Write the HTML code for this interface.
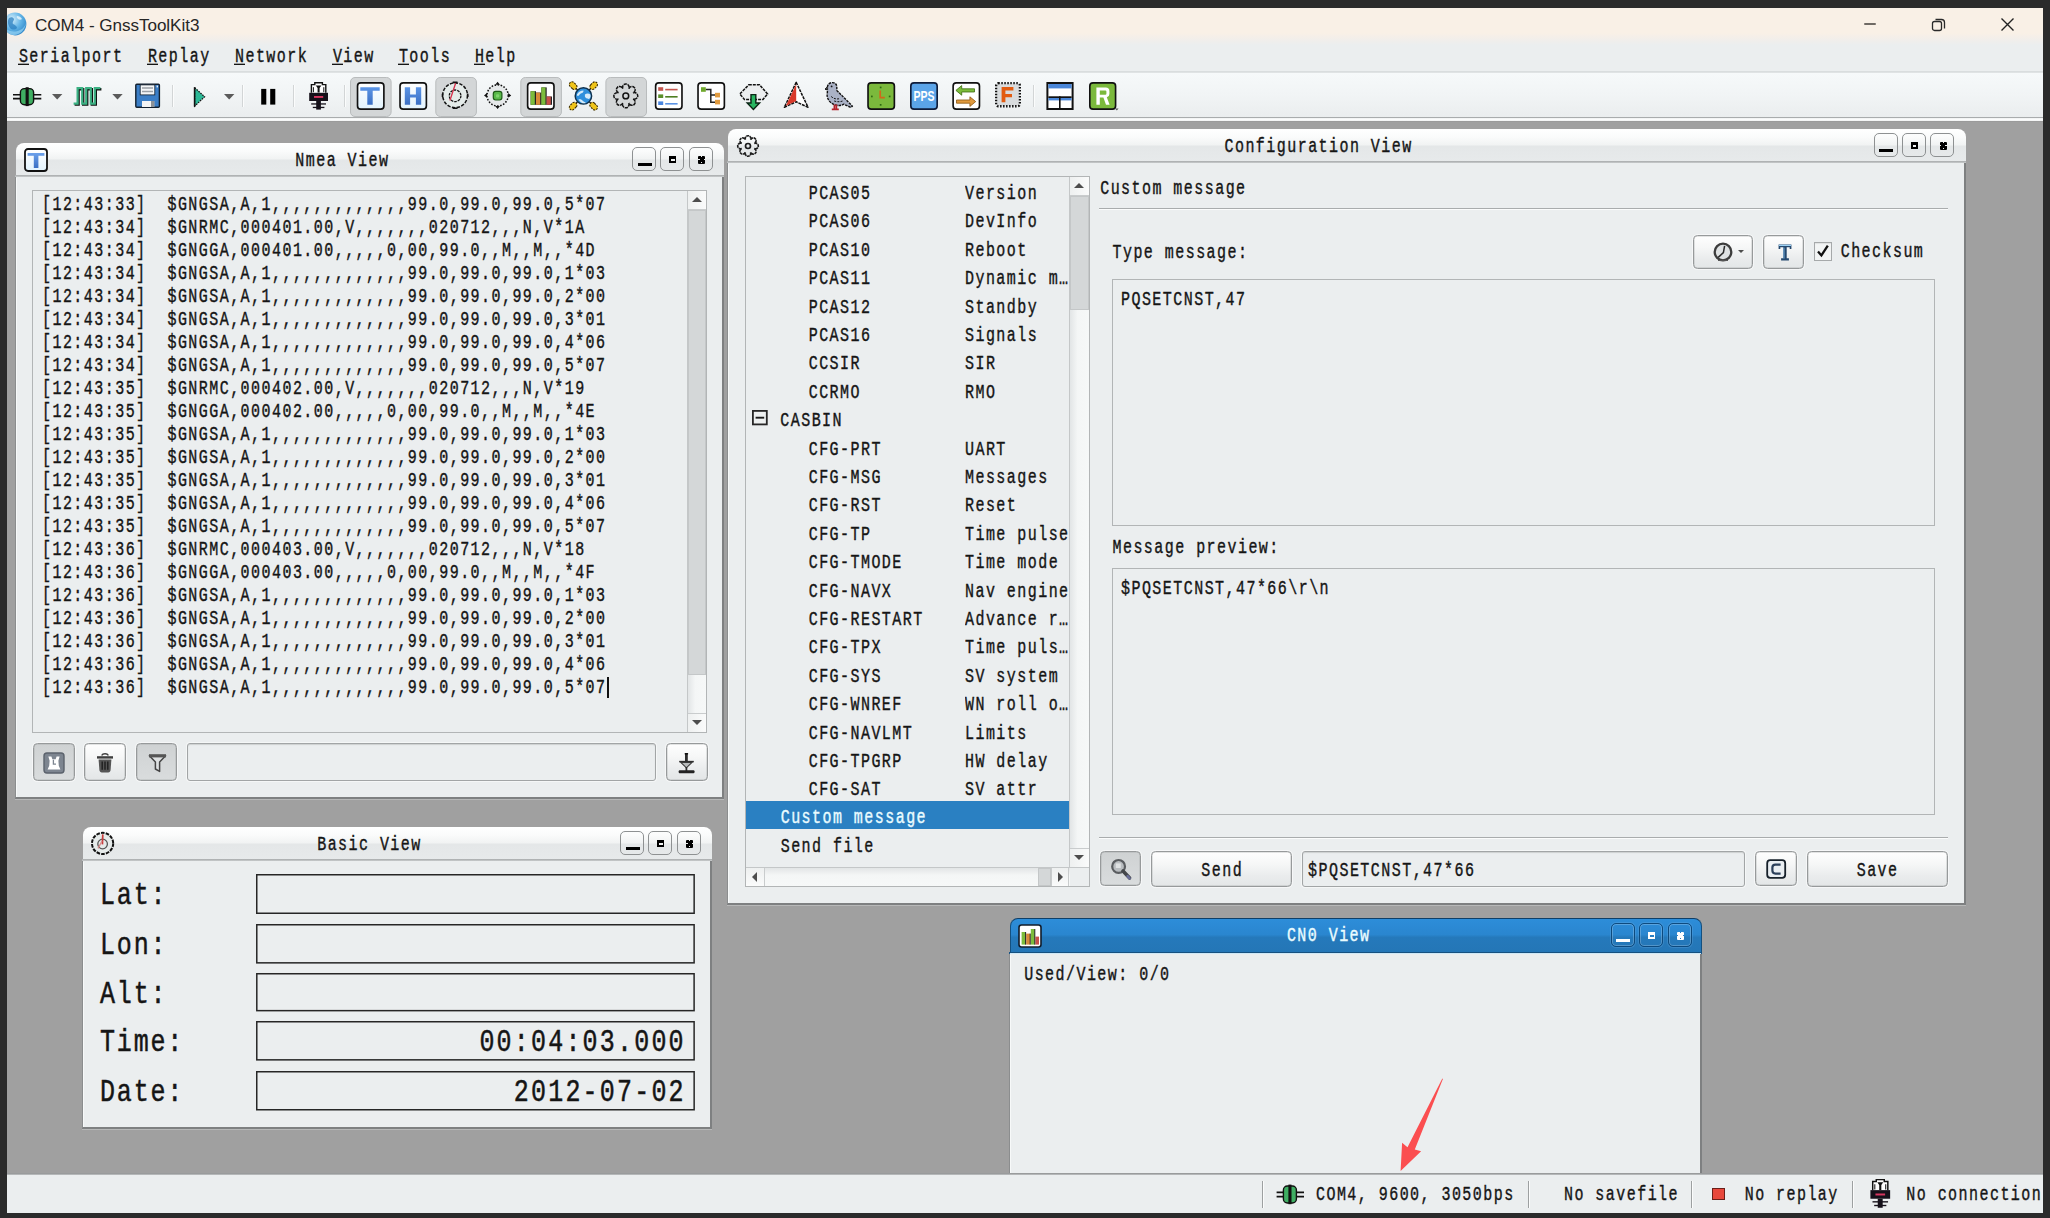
<!DOCTYPE html>
<html>
<head>
<meta charset="utf-8">
<title>COM4 - GnssToolKit3</title>
<style>
*{box-sizing:border-box;margin:0;padding:0}
html,body{width:2050px;height:1218px;overflow:hidden;background:#2b2b2b}
body{position:relative;font-family:"Liberation Mono",monospace;color:#151515}
#app{position:absolute;left:0;top:0;width:2050px;height:1218px;background:#a0a0a0;clip-path:inset(8px 7px 5px 7px)}
.m{position:absolute;font-family:"Liberation Mono",monospace;font-size:15.0px;letter-spacing:1.452px;line-height:20px;white-space:pre;transform:scaleY(1.37);transform-origin:0 0;color:#151515;-webkit-text-stroke:0.3px currentColor}
.big{font-size:25.0px;line-height:27px;letter-spacing:1.83px;transform:scaleY(1.285);-webkit-text-stroke:0.4px currentColor}
.w{color:#eafcff}
.win{position:absolute;background:#ebeeef}
.btn{position:absolute;border:1px solid #979a9b;border-radius:4.500px;background:linear-gradient(#fefefe,#f6f7f7 35%,#eaeced 70%,#e3e6e7);box-shadow:0 0 0 1px rgba(255,255,255,.55),inset 0 0 0 .5px rgba(150,153,154,.5)}
.btn.on{background:linear-gradient(#cfd2d3,#d9dcdd);border-color:#979a9b}
.fld{position:absolute;border:1px solid #a2a5a6;border-radius:3px;background:#ebeeef;box-shadow:inset 0 1px 1px rgba(0,0,0,.13),0 0 0 1px rgba(255,255,255,.5)}
.ta{position:absolute;border:1px solid #b2b5b6;background:#ebeeef;box-shadow:inset 1px 1px 0 rgba(255,255,255,.0)}
.tbn{position:absolute;width:24px;height:24px;border:1px solid #8e9192;border-radius:5px}
.tbn i{position:absolute;background:#000;display:block}
.tbn.a{border:1.500px solid #0d4a7e;box-shadow:inset 0 0 0 1px rgba(255,255,255,.22),0 0 0 1px rgba(120,180,230,.25)}
.tbn.a i{background:#fff}
.hl{position:absolute;height:2px;background:linear-gradient(#a9acad 50%,#fbfcfc 50%)}
.sbt{position:absolute;background:linear-gradient(90deg,#e2e5e6,#f4f6f6 40%,#f6f8f8);}
.sbh{position:absolute;background:linear-gradient(#e2e5e6,#f4f6f6 40%,#f6f8f8);}
.thumb{position:absolute;background:#d4d7d8;border:1px solid #c4c7c8}
.pressed{position:absolute;background:#d3d5d6;border:1px solid #c3c5c6;border-radius:5px}
.tsep{position:absolute;width:2px;height:22px;top:85px;background:linear-gradient(90deg,#d3d6d7 50%,#fafbfb 50%)}
</style>
</head>
<body>
<div id="app">
<div style="position:absolute;left:0px;top:0px;width:2050px;height:46px;background:linear-gradient(#f9f0e6 0,#f9f0e6 33px,#f2eeea 39px,#ebeeef 45px)"></div>
<svg style="position:absolute;left:2.5px;top:12px" width="24" height="24" viewBox="0 0 24 24"><defs><radialGradient id="gl" cx="35%" cy="30%" r="75%"><stop offset="0" stop-color="#d9f0fb"/><stop offset=".55" stop-color="#63b4e6"/><stop offset="1" stop-color="#2e86c8"/></radialGradient></defs><circle cx="12" cy="12" r="11.400" fill="url(#gl)"/><path d="M6 6c2-1 4-1 5 1 0 2-2 3-1 5 2 1 4 2 4 4-2 2-5 2-7 0-2-3-3-7-1-10z" fill="#2b7fc0" opacity=".75"/><path d="M14 4c2 0 4 1 5 3-1 1-3 1-4 0s-2-2-1-3z" fill="#eaf6fd" opacity=".8"/><path d="M2 16c3 3 9 5 15 2 3-1 5-4 6-7-1 7-6 12-12 12-4 0-8-3-9-7z" fill="#9ad6f5" opacity=".7"/></svg>
<div style="position:absolute;left:35px;top:14.5px;font-family:'Liberation Sans',sans-serif;font-size:17.1px;line-height:22px;color:#262626;white-space:pre;letter-spacing:-0.05px">COM4 - GnssToolKit3</div>
<div style="position:absolute;left:1864px;top:23px;width:12px;height:2px;background:#6f6a64;border-radius:1px"></div>
<svg style="position:absolute;left:1931px;top:16.5px" width="16" height="16" viewBox="0 0 16 16"><rect x="1.5" y="4.5" width="9" height="9" rx="2" fill="none" stroke="#2a2a2a" stroke-width="1.3"/><path d="M4.5 2.5h6a3 3 0 0 1 3 3v6" fill="none" stroke="#2a2a2a" stroke-width="1.3"/></svg>
<svg style="position:absolute;left:2000px;top:17px" width="15" height="15" viewBox="0 0 15 15"><path d="M1.5 1.5l12 12M13.5 1.5l-12 12" stroke="#222" stroke-width="1.4" fill="none"/></svg>
<div style="position:absolute;left:0px;top:46px;width:2050px;height:26px;background:#ebeeef"></div>
<div style="position:absolute;left:0px;top:71px;width:2050px;height:2px;background:linear-gradient(#d6dadb,#e3e6e7)"></div>
<div class="m " style="left:18.9px;top:44px;">Serialport</div>
<div style="position:absolute;left:18px;top:64px;width:11px;height:1px;background:#151515;box-shadow:0 -1px 0 rgba(21,21,21,.35)"></div>
<div class="m " style="left:147.9px;top:44px;">Replay</div>
<div style="position:absolute;left:147px;top:64px;width:11px;height:1px;background:#151515;box-shadow:0 -1px 0 rgba(21,21,21,.35)"></div>
<div class="m " style="left:235.0px;top:44px;">Network</div>
<div style="position:absolute;left:234px;top:64px;width:11px;height:1px;background:#151515;box-shadow:0 -1px 0 rgba(21,21,21,.35)"></div>
<div class="m " style="left:332.9px;top:44px;">View</div>
<div style="position:absolute;left:332px;top:64px;width:11px;height:1px;background:#151515;box-shadow:0 -1px 0 rgba(21,21,21,.35)"></div>
<div class="m " style="left:398.9px;top:44px;">Tools</div>
<div style="position:absolute;left:398px;top:64px;width:11px;height:1px;background:#151515;box-shadow:0 -1px 0 rgba(21,21,21,.35)"></div>
<div class="m " style="left:474.9px;top:44px;">Help</div>
<div style="position:absolute;left:474px;top:64px;width:11px;height:1px;background:#151515;box-shadow:0 -1px 0 rgba(21,21,21,.35)"></div>
<div style="position:absolute;left:0px;top:73px;width:2050px;height:45px;background:linear-gradient(#f6f9fa,#f1f4f5 50%,#eaedee)"></div>
<div style="position:absolute;left:0px;top:117px;width:2050px;height:1px;background:#a9acad"></div>
<div style="position:absolute;left:0px;top:118px;width:2050px;height:3px;background:linear-gradient(#e9ebeb 0,#fbfcfc 30%,#fbfcfc 80%,#d0d1d1 100%)"></div>
<div style="position:absolute;left:0px;top:121px;width:2050px;height:1px;background:#9a9a9a"></div>
<svg style="position:absolute;left:0;top:73px" width="1140" height="46" viewBox="0 73 1140 46"><defs><linearGradient id="wb" x1="0" y1="0" x2="0" y2="1"><stop offset="0" stop-color="#ffffff"/><stop offset="1" stop-color="#e2f3fd"/></linearGradient><linearGradient id="bl" x1="0" y1="0" x2="0" y2="1"><stop offset="0" stop-color="#5b95e6"/><stop offset="1" stop-color="#3a6fc4"/></linearGradient><radialGradient id="gb" cx="40%" cy="35%" r="70%"><stop offset="0" stop-color="#bfe6fb"/><stop offset=".6" stop-color="#3d9be0"/><stop offset="1" stop-color="#1f6fb8"/></radialGradient></defs><rect x="350.5" y="77.5" width="40.6" height="39" rx="4.5" fill="#d3d6d7" stroke="#b9bcbd"/><rect x="435.8" y="77.5" width="40.6" height="39" rx="4.5" fill="#d3d6d7" stroke="#b9bcbd"/><rect x="520.8" y="77.5" width="40.6" height="39" rx="4.5" fill="#d3d6d7" stroke="#b9bcbd"/><rect x="605.9" y="77.5" width="40.6" height="39" rx="4.5" fill="#d3d6d7" stroke="#b9bcbd"/><rect x="172" y="85" width="1" height="22" fill="#d2d5d6"/><rect x="173" y="85" width="1" height="22" fill="#fbfcfc"/><rect x="242" y="85" width="1" height="22" fill="#d2d5d6"/><rect x="243" y="85" width="1" height="22" fill="#fbfcfc"/><rect x="293" y="85" width="1" height="22" fill="#d2d5d6"/><rect x="294" y="85" width="1" height="22" fill="#fbfcfc"/><rect x="344" y="85" width="1" height="22" fill="#d2d5d6"/><rect x="345" y="85" width="1" height="22" fill="#fbfcfc"/><rect x="1033" y="85" width="1" height="22" fill="#d2d5d6"/><rect x="1034" y="85" width="1" height="22" fill="#fbfcfc"/><path d="M13 94.7h8M13 98.6h8M33 94.7h8.3M33 98.6h8.3" stroke="#111" stroke-width="1.6"/><rect x="20.4" y="88.6" width="13.2" height="16.2" rx="4" fill="#3fae62" stroke="#111" stroke-width="1.4"/><rect x="25.6" y="87.2" width="3.1" height="18.9" fill="#111"/><path d="M52.0 94h10.4l-5.2 5.4z" fill="#5b5b5b"/><path d="M73.6 103.6h4V88.2h4.6v15.4h4V88.2h4.6v15.4h4V88.2h5.6" fill="none" stroke="#111" stroke-width="2.4" transform="translate(1,1)"/><path d="M73.6 103.6h4V88.2h4.6v15.4h4V88.2h4.6v15.4h4V88.2h5.6" fill="none" stroke="#3bb183" stroke-width="2.2"/><path d="M112.3 94h10.4l-5.2 5.4z" fill="#5b5b5b"/><rect x="135.8" y="84.3" width="23.6" height="23" rx="1" fill="#3b7ec6" stroke="#13202e" stroke-width="1.4"/><rect x="140.2" y="84.9" width="14.6" height="10" fill="#f4f6f7" stroke="#13202e" stroke-width=".8"/><path d="M142 88h11M142 91.4h11" stroke="#9aa0a6" stroke-width="1.5"/><rect x="142" y="101" width="12.2" height="6" fill="#f4f4f4"/><rect x="151" y="101" width="3.4" height="6" fill="#8c9298"/><rect x="156.6" y="85.6" width="1.4" height="1.8" fill="#e8f2fb"/><path d="M194.6 87.6v18.6L204.6 96.8z" fill="#2cb896" stroke="#111" stroke-width="1.2" stroke-dasharray="1.6 1"/><path d="M194.6 87.2v19.4" stroke="#111" stroke-width="1.6"/><path d="M224.0 94h10.4l-5.2 5.4z" fill="#5b5b5b"/><rect x="261.2" y="88.9" width="5.1" height="15.7" fill="#000"/><rect x="270.2" y="88.9" width="5.1" height="15.7" fill="#000"/><g transform="translate(309.2,82.2) scale(1.0)"><path d="M2.2 10.6V2.4h3.4V.6h7.6v1.8h3.4v8.2" fill="#fff" stroke="#111" stroke-width="1.4"/><path d="M6.6 3.2h5.6l-1.8 2.6v4.6H8.4V5.8z" fill="#111"/><path d="M4.2 5v5M14.6 5v5" stroke="#111" stroke-width="1"/><rect x="0" y="10.6" width="18.8" height="8.2" fill="#16111a"/><rect x="4.8" y="13.8" width="9.2" height="1.9" fill="#d6365f"/><rect x="7" y="18.8" width="4.7" height="8.6" fill="#16111a"/><rect x="2" y="21.1" width="14.8" height="1.3" fill="#16111a"/><rect x="3.6" y="24.6" width="11.6" height="1.3" fill="#16111a"/></g><rect x="357.525" y="82.825" width="26.35" height="26.35" rx="3.2" fill="url(#wb)" stroke="#111" stroke-width="1.65" /><path d="M360.3 87.2h19.4v3.6h-7v14h-5.4v-14h-7z" fill="url(#bl)"/><rect x="400.025" y="82.825" width="26.35" height="26.35" rx="3.2" fill="url(#wb)" stroke="#111" stroke-width="1.65" /><path d="M404.8 87.2h5.3v7.4h5.8v-7.4h5.3v17.6h-5.3v-7.4h-5.8v7.4h-5.3z" fill="url(#bl)"/><g transform="translate(455.1,95.3) scale(1.0)"><circle r="12.4" fill="#e4ebe9" stroke="#111" stroke-width="1.5" stroke-dasharray="3.4 1.4"/><circle cy=".5" r="5.8" fill="none" stroke="#111" stroke-width="1.3" stroke-dasharray="2.6 1"/><path d="M-2.4 -12.9h4.8M-2.4 12.9h4.8M-12.6 -1.6v3.2M12.6 -1.6v3.2" stroke="#111" stroke-width="1.6"/><path d="M.5 -12L-5.2 5.2" stroke="#d6304a" stroke-width="1.3"/></g><g transform="translate(497.6,95.4)"><circle r="10.6" fill="#e6e9ea" stroke="#111" stroke-width="1.5" stroke-dasharray="1.6 1.5"/><path d="M0 -13.6l2.4 3h-4.8zM0 13.6l2.4 -3h-4.8zM-13.6 0l3 -2.4v4.8zM13.6 0l-3 -2.4v4.8z" fill="#111"/><rect x="-4.3" y="-4" width="8.6" height="8.6" rx="2.4" fill="#58b848" stroke="#1d5a16" stroke-width="1.2"/><rect x="-1.6" y="-1.2" width="3.2" height="3.2" rx="1" fill="#7fd46c"/></g><rect x="527.625" y="82.825" width="26.35" height="26.35" rx="3.2" fill="#fff" stroke="#111" stroke-width="1.65" /><rect x="530.5999999999999" y="91.2" width="5.4" height="13.600000000000001" fill="#222"/><rect x="530.5999999999999" y="91.2" width="4.2" height="13.600000000000001" fill="#7cbc3c"/><rect x="536.0" y="92.6" width="5.4" height="12.200000000000001" fill="#222"/><rect x="536.0" y="92.6" width="4.2" height="12.200000000000001" fill="#d98a3a"/><rect x="541.3" y="87.4" width="5.4" height="17.4" fill="#222"/><rect x="541.3" y="87.4" width="4.2" height="17.4" fill="#7cbc3c"/><rect x="546.5999999999999" y="96.5" width="5.4" height="8.3" fill="#222"/><rect x="546.5999999999999" y="96.5" width="4.2" height="8.3" fill="#c9504a"/><g transform="translate(583.4,95.9)"><g transform="rotate(45)"><path d="M6 0h6" stroke="#111" stroke-width="1.2"/><rect x="10.2" y="-2.700" width="8.600" height="5.400" rx="2.700" fill="#f0c419" stroke="#3a2a00" stroke-width="1.1" stroke-dasharray="2 1"/></g><g transform="rotate(135)"><path d="M6 0h6" stroke="#111" stroke-width="1.2"/><rect x="10.2" y="-2.700" width="8.600" height="5.400" rx="2.700" fill="#f0c419" stroke="#3a2a00" stroke-width="1.1" stroke-dasharray="2 1"/></g><g transform="rotate(225)"><path d="M6 0h6" stroke="#111" stroke-width="1.2"/><rect x="10.2" y="-2.700" width="8.600" height="5.400" rx="2.700" fill="#f0c419" stroke="#3a2a00" stroke-width="1.1" stroke-dasharray="2 1"/></g><g transform="rotate(315)"><path d="M6 0h6" stroke="#111" stroke-width="1.2"/><rect x="10.2" y="-2.700" width="8.600" height="5.400" rx="2.700" fill="#f0c419" stroke="#3a2a00" stroke-width="1.1" stroke-dasharray="2 1"/></g><circle r="8.2" fill="#2e8fdc" stroke="#10324e" stroke-width="1.5"/><path d="M-6.500 -1.500c1.500-2.500 4-4 6.500-4 .5 1.500-1 2.500-2.500 3s-1.500 2.500-3.500 2.500zM1.500 -1.500c2-1.500 4-1 5.500 0 .5 2 0 3.500-1.500 4.500-2-.5-3.500-1-4-2.500zM-5 3.500c2-.5 3.500 0 4.500 1.500 1 1 2.500 1 3 2-2 .800-5 .500-7.500-3.500z" fill="#e4f3fc" opacity=".92"/></g><g transform="translate(625.8,95.9) scale(1.0)" fill="none" stroke="#111" stroke-width="1.5"><path d="M7.28 -2.92A3.25 3.25 0 1 1 7.28 2.92M7.21 3.08A3.25 3.25 0 1 1 3.08 7.21M2.92 7.28A3.25 3.25 0 1 1 -2.92 7.28M-3.08 7.21A3.25 3.25 0 1 1 -7.21 3.08M-7.28 2.92A3.25 3.25 0 1 1 -7.28 -2.92M-7.21 -3.08A3.25 3.25 0 1 1 -3.08 -7.21M-2.92 -7.28A3.25 3.25 0 1 1 2.92 -7.28M3.08 -7.21A3.25 3.25 0 1 1 7.21 -3.08" stroke-dasharray="3.400 .700"/><circle r="2.900"/></g><rect x="655.625" y="82.825" width="26.35" height="26.35" rx="3.2" fill="#fff" stroke="#111" stroke-width="1.65" /><rect x="658.1999999999999" y="87.2" width="5" height="3.6" fill="#c4564e"/><rect x="665.1999999999999" y="88.8" width="12.4" height="1.6" fill="#c4564e"/><rect x="658.1999999999999" y="94.4" width="5" height="3.6" fill="#5c8f2a"/><rect x="665.1999999999999" y="96.0" width="12.4" height="1.6" fill="#4f7f22"/><rect x="658.1999999999999" y="101.4" width="5" height="3.6" fill="#4a86e0"/><rect x="665.1999999999999" y="103.0" width="12.4" height="1.6" fill="#5b93e4"/><rect x="698.0250000000001" y="82.825" width="26.35" height="26.35" rx="3.2" fill="#fff" stroke="#111" stroke-width="1.65" /><path d="M705.6 89.6h5.2v12.6h4.6M710.8000000000001 95h4.6" fill="none" stroke="#222" stroke-width="1.5"/><rect x="701.0" y="87.2" width="4.8" height="4.6" fill="#6fa82c"/><rect x="715.0" y="92.8" width="5" height="4.6" fill="#e09a3e"/><rect x="715.0" y="99.8" width="5" height="4.6" fill="#e09a3e"/><g transform="translate(739.2,82)"><path d="M9.6 2.8h10.8l8 9.2-4.6 5.4H5.2L.6 12z" fill="#eceeef" stroke="#111" stroke-width="1.5" stroke-dasharray="3 1"/><path d="M11.800 12.600h4.800v8.400h3.800l-6.200 6.400-6.200-6.400h3.800z" fill="#27b560" stroke="#0a2414" stroke-width="1.400"/></g><g transform="translate(796.2,82)"><path d="M0 .4L-11.8 25.2 0 19.8 11.8 25.2z" fill="#fff" stroke="#111" stroke-width="1.5" stroke-linejoin="round" stroke-dasharray="3 .9"/><path d="M0 2.2L-10.4 24 0 19z" fill="#d93a2b"/></g><g transform="translate(824.2,82)"><path d="M3.2 5.2c.2-3 2.4-4.8 5.4-4.6 2.6.2 4 2 4 4.4v3.4l15.6 15.8-1.6 1.2-7-3.2c-2.6 1.6-6.6 1.8-10 .2C4.600 20 2 15.600 3.200 10.400z" fill="#aab2c6" stroke="#111" stroke-width="1.4" stroke-dasharray="2.6 .9" stroke-linejoin="round"/><path d="M3.300 4.800L.8 7.200l2.600.8" fill="#555" stroke="#111" stroke-width="1"/><circle cx="7.400" cy="4.400" r=".9" fill="#111"/><path d="M7 14.500c2.400 2.400 6 3 9 2M10 19c3 1 6 1 8.500 0" stroke="#111" stroke-width="1" fill="none" stroke-dasharray="2 1.2"/><path d="M10.200 22.400v4.600M12.200 22.400v4.600M7.600 27.400h7" stroke="#b5222c" stroke-width="1.7"/></g><rect x="868.0250000000001" y="82.825" width="26.35" height="26.35" rx="3.2" fill="#7bb93c" stroke="#111" stroke-width="1.65" /><path d="M880.2 90.6v7h4.600" fill="none" stroke="#d0681a" stroke-width="1.7"/><rect x="879.8000000000001" y="86.6" width="1.7" height="1.7" fill="#2f6a12"/><rect x="879.8000000000001" y="104" width="1.7" height="1.7" fill="#2f6a12"/><rect x="871.0" y="95.6" width="1.7" height="1.7" fill="#2f6a12"/><rect x="888.8000000000001" y="95.6" width="1.7" height="1.7" fill="#2f6a12"/><rect x="910.825" y="82.825" width="26.35" height="26.35" rx="3.2" fill="#5ba4e8" stroke="#0f1c3a" stroke-width="1.65" /><text x="924" y="101.4" text-anchor="middle" font-family="Liberation Sans" font-weight="bold" font-size="11.6" fill="#fff" textLength="21" lengthAdjust="spacingAndGlyphs" transform="translate(0,-25.35) scale(1,1.25)">PPS</text><rect x="953.125" y="82.825" width="26.35" height="26.35" rx="3.2" fill="#fff" stroke="#111" stroke-width="1.65" /><path d="M955.9 90.4l5.800-4.800v3.200h12.800v3.200H961.6999999999999v3.200z" fill="#7cbc3c" stroke="#3c6a12" stroke-width=".8"/><path d="M975.6999999999999 101.6l-5.800-4.800v3.200H956.5v3.200h13.400v3.200z" fill="#e09a3e" stroke="#8a5510" stroke-width=".8"/><rect x="996.3" y="83.3" width="23.400" height="22.800" rx="2" fill="#d9dcde" stroke="#111" stroke-width="2.6" stroke-dasharray="1.500 1.500"/><rect x="997.4" y="84.4" width="21.200" height="20.600" rx="1.500" fill="#d9dcde"/><path d="M1001.6 87h11.800v3.400h-8v3.600h6.600v3.300h-6.600v5h-3.800z" fill="#e25c12"/><rect x="1047.4" y="83" width="25.200" height="26" fill="#fff" stroke="#111" stroke-width="2"/><rect x="1048.4" y="84" width="23.200" height="4.400" fill="#4a86d8"/><rect x="1048.4" y="96.3" width="23.200" height="1.700" fill="#111"/><rect x="1048.4" y="98" width="23.200" height="2.400" fill="#4a86d8"/><rect x="1059.0" y="96.3" width="1.600" height="12" fill="#111"/><rect x="1089.825" y="82.825" width="25.75" height="26.35" rx="3.2" fill="#7bb93c" stroke="#111" stroke-width="1.65" /><path d="M1096.4 87.6h9.400a3.600 3.600 0 0 1 3.600 3.600v2.800a3.400 3.400 0 0 1-2.600 3.300l2.800 7.500h-3.600l-2.600-7.200h-3.600v7.200h-3.400zM1099.8 90.6v4.200h5.600a1 1 0 0 0 1-1v-2.200a1 1 0 0 0-1-1z" fill="#fff"/><path d="M1115 108.4h3.600l-1.800 2.200z" fill="#555"/></svg>
<div style="position:absolute;left:15px;top:176px;width:709px;height:622.5px;background:#ebeeef;border-left:1px solid #8b8d8e;border-right:2px solid #7e8081;border-bottom:2px solid #7e8081;box-shadow:0 1px 0 #b7b8b8"></div><div style="position:absolute;left:16px;top:178px;width:1px;height:618.5px;background:#f7f9f9"></div><div style="position:absolute;left:16px;top:143px;width:708px;height:33px;background:linear-gradient(#ffffff 0,#fafbfb 25%,#f1f3f3 48%,#e4e7e8 52%,#e7eaeb 100%);border-radius:8px 8px 0 0;"></div><div style="position:absolute;left:15px;top:175px;width:709px;height:2px;background:linear-gradient(#a7aaab,#c9cccd)"></div><div class="m " style="left:295.3px;top:148px;">Nmea View</div><div class="tbn" style="left:632px;top:147px"><i style="left:4.500px;top:15px;width:14px;height:3px"></i></div><div class="tbn" style="left:660.3px;top:147px"><i style="left:8px;top:8px;width:7px;height:7px"></i><i style="left:10px;top:11px;width:3.5px;height:2.2px;background:#f0f2f2"></i></div><div class="tbn" style="left:688.8px;top:147px"><i style="left:8.5px;top:8px;width:7px;height:7.5px;border-radius:1px"></i><i style="left:11.300px;top:8px;width:1.4px;height:1.3px;background:#eef0f0"></i><i style="left:11.300px;top:14.200px;width:1.4px;height:1.3px;background:#eef0f0"></i><i style="left:8.5px;top:11.100px;width:1.3px;height:1.4px;background:#eef0f0"></i><i style="left:14.200px;top:11.100px;width:1.3px;height:1.4px;background:#eef0f0"></i></div><svg style="position:absolute;left:24px;top:148px" width="24" height="24" viewBox="0 0 24 24"><defs><linearGradient id="wb2" x1="0" y1="0" x2="0" y2="1"><stop offset="0" stop-color="#fff"/><stop offset="1" stop-color="#e2f3fd"/></linearGradient><linearGradient id="bl2" x1="0" y1="0" x2="0" y2="1"><stop offset="0" stop-color="#6aa0ea"/><stop offset="1" stop-color="#3a6fc4"/></linearGradient></defs><rect x="1" y="1" width="22" height="22" rx="3" fill="url(#wb2)" stroke="#111" stroke-width="1.8"/><path d="M3.600 5h16.800v2.800h-6v12.200h-4.600V7.800h-6.200z" fill="url(#bl2)"/></svg><div class="ta" style="position:absolute;left:32px;top:190px;width:675px;height:543px;"></div><div class="m " style="left:42.0px;top:192px;">[12:43:33]  $GNGSA,A,1,,,,,,,,,,,,,99.0,99.0,99.0,5*07</div><div class="m " style="left:42.0px;top:215px;">[12:43:34]  $GNRMC,000401.00,V,,,,,,,020712,,,N,V*1A</div><div class="m " style="left:42.0px;top:238px;">[12:43:34]  $GNGGA,000401.00,,,,,0,00,99.0,,M,,M,,*4D</div><div class="m " style="left:42.0px;top:261px;">[12:43:34]  $GNGSA,A,1,,,,,,,,,,,,,99.0,99.0,99.0,1*03</div><div class="m " style="left:42.0px;top:284px;">[12:43:34]  $GNGSA,A,1,,,,,,,,,,,,,99.0,99.0,99.0,2*00</div><div class="m " style="left:42.0px;top:307px;">[12:43:34]  $GNGSA,A,1,,,,,,,,,,,,,99.0,99.0,99.0,3*01</div><div class="m " style="left:42.0px;top:330px;">[12:43:34]  $GNGSA,A,1,,,,,,,,,,,,,99.0,99.0,99.0,4*06</div><div class="m " style="left:42.0px;top:353px;">[12:43:34]  $GNGSA,A,1,,,,,,,,,,,,,99.0,99.0,99.0,5*07</div><div class="m " style="left:42.0px;top:376px;">[12:43:35]  $GNRMC,000402.00,V,,,,,,,020712,,,N,V*19</div><div class="m " style="left:42.0px;top:399px;">[12:43:35]  $GNGGA,000402.00,,,,,0,00,99.0,,M,,M,,*4E</div><div class="m " style="left:42.0px;top:422px;">[12:43:35]  $GNGSA,A,1,,,,,,,,,,,,,99.0,99.0,99.0,1*03</div><div class="m " style="left:42.0px;top:445px;">[12:43:35]  $GNGSA,A,1,,,,,,,,,,,,,99.0,99.0,99.0,2*00</div><div class="m " style="left:42.0px;top:468px;">[12:43:35]  $GNGSA,A,1,,,,,,,,,,,,,99.0,99.0,99.0,3*01</div><div class="m " style="left:42.0px;top:491px;">[12:43:35]  $GNGSA,A,1,,,,,,,,,,,,,99.0,99.0,99.0,4*06</div><div class="m " style="left:42.0px;top:514px;">[12:43:35]  $GNGSA,A,1,,,,,,,,,,,,,99.0,99.0,99.0,5*07</div><div class="m " style="left:42.0px;top:537px;">[12:43:36]  $GNRMC,000403.00,V,,,,,,,020712,,,N,V*18</div><div class="m " style="left:42.0px;top:560px;">[12:43:36]  $GNGGA,000403.00,,,,,0,00,99.0,,M,,M,,*4F</div><div class="m " style="left:42.0px;top:583px;">[12:43:36]  $GNGSA,A,1,,,,,,,,,,,,,99.0,99.0,99.0,1*03</div><div class="m " style="left:42.0px;top:606px;">[12:43:36]  $GNGSA,A,1,,,,,,,,,,,,,99.0,99.0,99.0,2*00</div><div class="m " style="left:42.0px;top:629px;">[12:43:36]  $GNGSA,A,1,,,,,,,,,,,,,99.0,99.0,99.0,3*01</div><div class="m " style="left:42.0px;top:652px;">[12:43:36]  $GNGSA,A,1,,,,,,,,,,,,,99.0,99.0,99.0,4*06</div><div class="m " style="left:42.0px;top:675px;">[12:43:36]  $GNGSA,A,1,,,,,,,,,,,,,99.0,99.0,99.0,5*07</div><div style="position:absolute;left:607.3px;top:677px;width:1.4px;height:21px;background:#111"></div><div class="sbt" style="position:absolute;left:687px;top:191px;width:19px;height:541px;border-left:1px solid #c4c7c8"></div><div style="position:absolute;left:688px;top:191px;width:18px;height:19px;background:linear-gradient(90deg,#eef0f0,#fafbfb);border-bottom:1px solid #c9cccd"></div><div style="position:absolute;width:0;height:0;border-left:5px solid transparent;border-right:5px solid transparent;border-bottom:5px solid #4d4d4d;left:691.5px;top:197.0px"></div><div class="thumb" style="position:absolute;left:688px;top:210px;width:18px;height:465px;"></div><div style="position:absolute;left:688px;top:713px;width:18px;height:19px;background:linear-gradient(90deg,#eef0f0,#fafbfb);border-top:1px solid #c9cccd"></div><div style="position:absolute;width:0;height:0;border-left:5px solid transparent;border-right:5px solid transparent;border-top:5px solid #4d4d4d;left:691.5px;top:719.5px"></div><div class="btn on" style="position:absolute;left:33px;top:743px;width:41.5px;height:38.3px;"></div><svg style="position:absolute;left:42.5px;top:751.5px" width="22" height="22" viewBox="0 0 22 22"><rect x="1" y="1" width="20" height="20" rx="3" fill="#7d8590" stroke="#5b626c" stroke-width="1.4"/><path d="M5.400 4.600h3l1 2.600h3.200l1-2.600h3l-1.200 4.200.4 5 1.600 3.600H4.600l1.600-3.600.4-5z" fill="#fff"/><path d="M10.400 7.800v4.400h2.600" stroke="#7d8590" stroke-width="1.300" fill="none"/></svg><div class="btn" style="position:absolute;left:84.2px;top:743px;width:41.5px;height:38.3px;"></div><svg style="position:absolute;left:96px;top:752px" width="18" height="21" viewBox="0 0 18 21"><path d="M1 5.400h16" stroke="#3e3e3e" stroke-width="2.400"/><path d="M6 3.600c0-2.400 6-2.400 6 0" fill="none" stroke="#3e3e3e" stroke-width="1.600"/><path d="M2.600 7.600h12.800l-.8 10.400c-.2 1.600-1 2.400-2.400 2.400H5.800c-1.400 0-2.200-.8-2.400-2.400z" fill="#555"/><path d="M6.200 9.400v8.400M9 9.400v8.400M11.800 9.400v8.400" stroke="#1e1e1e" stroke-width="1.400"/></svg><div class="btn on" style="position:absolute;left:135.5px;top:743px;width:41.5px;height:38.3px;"></div><svg style="position:absolute;left:148px;top:753px" width="19" height="20" viewBox="0 0 19 20"><path d="M1.400 2.800h16.200L11.600 9v9.400L7.400 16V9z" fill="#dfe2e3" stroke="#454545" stroke-width="1.500" stroke-linejoin="round"/><path d="M1 1.200h17v3.200H1z" fill="#555"/></svg><div class="fld" style="position:absolute;left:187px;top:743px;width:468.5px;height:38.3px;"></div><div class="btn" style="position:absolute;left:666px;top:743px;width:41.5px;height:38.3px;"></div><svg style="position:absolute;left:677.3px;top:752px" width="19" height="22" viewBox="0 0 19 22"><path d="M9.400 1.200v9" stroke="#2c2c2c" stroke-width="2.800"/><path d="M9.400 1.200v1.200" stroke="#000" stroke-width="3.400"/><path d="M2.200 9.600h14.600" stroke="#2c2c2c" stroke-width="1.500"/><path d="M3.800 10.400h11.200l-5.600 5.400z" fill="#b8bbbc" stroke="#3a3a3a" stroke-width="1.100"/><path d="M9.400 15v4" stroke="#2c2c2c" stroke-width="1.800"/><rect x="1.700" y="18.200" width="15.800" height="3" rx="1" fill="#222"/></svg>
<div style="position:absolute;left:82px;top:860px;width:630px;height:269px;background:#ebeeef;border-left:1px solid #8b8d8e;border-right:2px solid #7e8081;border-bottom:2px solid #7e8081;box-shadow:0 1px 0 #b7b8b8"></div><div style="position:absolute;left:83px;top:862px;width:1px;height:265px;background:#f7f9f9"></div><div style="position:absolute;left:83px;top:827px;width:629px;height:33px;background:linear-gradient(#ffffff 0,#fafbfb 25%,#f1f3f3 48%,#e4e7e8 52%,#e7eaeb 100%);border-radius:8px 8px 0 0;"></div><div style="position:absolute;left:82px;top:859px;width:630px;height:2px;background:linear-gradient(#a7aaab,#c9cccd)"></div><div class="m " style="left:317.2px;top:832px;">Basic View</div><div class="tbn" style="left:620px;top:831px"><i style="left:4.500px;top:15px;width:14px;height:3px"></i></div><div class="tbn" style="left:648.3px;top:831px"><i style="left:8px;top:8px;width:7px;height:7px"></i><i style="left:10px;top:11px;width:3.5px;height:2.2px;background:#f0f2f2"></i></div><div class="tbn" style="left:676.8px;top:831px"><i style="left:8.5px;top:8px;width:7px;height:7.5px;border-radius:1px"></i><i style="left:11.300px;top:8px;width:1.4px;height:1.3px;background:#eef0f0"></i><i style="left:11.300px;top:14.200px;width:1.4px;height:1.3px;background:#eef0f0"></i><i style="left:8.5px;top:11.100px;width:1.3px;height:1.4px;background:#eef0f0"></i><i style="left:14.200px;top:11.100px;width:1.3px;height:1.4px;background:#eef0f0"></i></div><svg style="position:absolute;left:90px;top:830.5px" width="25" height="25" viewBox="0 0 25 25"><circle cx="12.600" cy="12.400" r="10.600" fill="#e6ebea" stroke="#111" stroke-width="2" stroke-dasharray="3.600 1.200"/><circle cx="12.600" cy="13" r="4.800" fill="none" stroke="#555" stroke-width="1.300"/><path d="M12.800 3.400L12.400 13.400" stroke="#c83a3a" stroke-width="1.700"/><path d="M12 10L8 17.400" stroke="#d98a8a" stroke-width="1.300"/></svg><svg style="position:absolute;left:254px;top:872.2px" width="444" height="44.0" viewBox="0 0 444 44.0"><rect x="2.750" y="2.750" width="437.400" height="38.5" fill="none" stroke="#262626" stroke-width="1.500"/></svg><div class="m big" style="left:100px;top:878px;">Lat:</div><svg style="position:absolute;left:254px;top:922.0px" width="444" height="43.6" viewBox="0 0 444 43.6"><rect x="2.750" y="2.750" width="437.400" height="38.1" fill="none" stroke="#262626" stroke-width="1.500"/></svg><div class="m big" style="left:100px;top:928px;">Lon:</div><svg style="position:absolute;left:254px;top:971.4px" width="444" height="42.4" viewBox="0 0 444 42.4"><rect x="2.750" y="2.750" width="437.400" height="36.9" fill="none" stroke="#262626" stroke-width="1.500"/></svg><div class="m big" style="left:100px;top:977px;">Alt:</div><svg style="position:absolute;left:254px;top:1019.4px" width="444" height="43.6" viewBox="0 0 444 43.6"><rect x="2.750" y="2.750" width="437.400" height="38.1" fill="none" stroke="#262626" stroke-width="1.500"/></svg><div class="m big" style="left:100px;top:1025px;">Time:</div><div class="m big" style="left:479.4px;top:1025px;letter-spacing:2.20px">00:04:03.000</div><svg style="position:absolute;left:254px;top:1069.3px" width="444" height="43.5" viewBox="0 0 444 43.5"><rect x="2.750" y="2.750" width="437.400" height="38.0" fill="none" stroke="#262626" stroke-width="1.500"/></svg><div class="m big" style="left:100px;top:1075px;">Date:</div><div class="m big" style="left:513.8px;top:1075px;letter-spacing:2.20px">2012-07-02</div>
<div style="position:absolute;left:727px;top:162px;width:1238.5px;height:743px;background:#ebeeef;border-left:1px solid #8b8d8e;border-right:2px solid #7e8081;border-bottom:2px solid #7e8081;box-shadow:0 1px 0 #b7b8b8"></div><div style="position:absolute;left:728px;top:164px;width:1px;height:739px;background:#f7f9f9"></div><div style="position:absolute;left:728px;top:129px;width:1237.5px;height:33px;background:linear-gradient(#ffffff 0,#fafbfb 25%,#f1f3f3 48%,#e4e7e8 52%,#e7eaeb 100%);border-radius:8px 8px 0 0;"></div><div style="position:absolute;left:727px;top:161px;width:1238.5px;height:2px;background:linear-gradient(#a7aaab,#c9cccd)"></div><div class="m " style="left:1224.5px;top:134px;">Configuration View</div><div class="tbn" style="left:1873.5px;top:133px"><i style="left:4.500px;top:15px;width:14px;height:3px"></i></div><div class="tbn" style="left:1901.8px;top:133px"><i style="left:8px;top:8px;width:7px;height:7px"></i><i style="left:10px;top:11px;width:3.5px;height:2.2px;background:#f0f2f2"></i></div><div class="tbn" style="left:1930.3px;top:133px"><i style="left:8.5px;top:8px;width:7px;height:7.5px;border-radius:1px"></i><i style="left:11.300px;top:8px;width:1.4px;height:1.3px;background:#eef0f0"></i><i style="left:11.300px;top:14.200px;width:1.4px;height:1.3px;background:#eef0f0"></i><i style="left:8.5px;top:11.100px;width:1.3px;height:1.4px;background:#eef0f0"></i><i style="left:14.200px;top:11.100px;width:1.3px;height:1.4px;background:#eef0f0"></i></div><svg style="position:absolute;left:736px;top:133.5px" width="24" height="24" viewBox="0 0 24 24"><g transform="translate(12,12) scale(0.86)" fill="none" stroke="#1c1c1c" stroke-width="1.95"><path d="M7.28 -2.92A3.25 3.25 0 1 1 7.28 2.92M7.21 3.08A3.25 3.25 0 1 1 3.08 7.21M2.92 7.28A3.25 3.25 0 1 1 -2.92 7.28M-3.08 7.21A3.25 3.25 0 1 1 -7.21 3.08M-7.28 2.92A3.25 3.25 0 1 1 -7.28 -2.92M-7.21 -3.08A3.25 3.25 0 1 1 -3.08 -7.21M-2.92 -7.28A3.25 3.25 0 1 1 2.92 -7.28M3.08 -7.21A3.25 3.25 0 1 1 7.21 -3.08" stroke-dasharray="3.400 .700"/><circle r="2.900"/></g></svg><div class="ta" style="position:absolute;left:745px;top:176px;width:344.5px;height:711px;"></div><div class="m " style="left:808.7px;top:181px;">PCAS05</div><div class="m " style="left:965.0px;top:181px;width:104.600px;overflow:hidden">Version</div><div class="m " style="left:808.7px;top:209px;">PCAS06</div><div class="m " style="left:965.0px;top:209px;width:104.600px;overflow:hidden">DevInfo</div><div class="m " style="left:808.7px;top:238px;">PCAS10</div><div class="m " style="left:965.0px;top:238px;width:104.600px;overflow:hidden">Reboot</div><div class="m " style="left:808.7px;top:266px;">PCAS11</div><div class="m " style="left:965.0px;top:266px;width:104.600px;overflow:hidden">Dynamic m…</div><div class="m " style="left:808.7px;top:295px;">PCAS12</div><div class="m " style="left:965.0px;top:295px;width:104.600px;overflow:hidden">Standby</div><div class="m " style="left:808.7px;top:323px;">PCAS16</div><div class="m " style="left:965.0px;top:323px;width:104.600px;overflow:hidden">Signals</div><div class="m " style="left:808.7px;top:351px;">CCSIR</div><div class="m " style="left:965.0px;top:351px;width:104.600px;overflow:hidden">SIR</div><div class="m " style="left:808.7px;top:380px;">CCRMO</div><div class="m " style="left:965.0px;top:380px;width:104.600px;overflow:hidden">RMO</div><svg style="position:absolute;left:750px;top:408px" width="20" height="20" viewBox="0 0 20 20"><rect x="2.900" y="2.900" width="13.900" height="13.500" fill="#edf0f0" stroke="#262626" stroke-width="1.800"/><path d="M5.600 9.700h8.600" stroke="#1a1a1a" stroke-width="1.900"/></svg><div class="m " style="left:780.3px;top:408px;">CASBIN</div><div class="m " style="left:808.7px;top:437px;">CFG-PRT</div><div class="m " style="left:965.0px;top:437px;width:104.600px;overflow:hidden">UART</div><div class="m " style="left:808.7px;top:465px;">CFG-MSG</div><div class="m " style="left:965.0px;top:465px;width:104.600px;overflow:hidden">Messages</div><div class="m " style="left:808.7px;top:493px;">CFG-RST</div><div class="m " style="left:965.0px;top:493px;width:104.600px;overflow:hidden">Reset</div><div class="m " style="left:808.7px;top:522px;">CFG-TP</div><div class="m " style="left:965.0px;top:522px;width:104.600px;overflow:hidden">Time pulse</div><div class="m " style="left:808.7px;top:550px;">CFG-TMODE</div><div class="m " style="left:965.0px;top:550px;width:104.600px;overflow:hidden">Time mode</div><div class="m " style="left:808.7px;top:579px;">CFG-NAVX</div><div class="m " style="left:965.0px;top:579px;width:104.600px;overflow:hidden">Nav engine</div><div class="m " style="left:808.7px;top:607px;">CFG-RESTART</div><div class="m " style="left:965.0px;top:607px;width:104.600px;overflow:hidden">Advance r…</div><div class="m " style="left:808.7px;top:635px;">CFG-TPX</div><div class="m " style="left:965.0px;top:635px;width:104.600px;overflow:hidden">Time puls…</div><div class="m " style="left:808.7px;top:664px;">CFG-SYS</div><div class="m " style="left:965.0px;top:664px;width:104.600px;overflow:hidden">SV system</div><div class="m " style="left:808.7px;top:692px;">CFG-WNREF</div><div class="m " style="left:965.0px;top:692px;width:104.600px;overflow:hidden">WN roll o…</div><div class="m " style="left:808.7px;top:721px;">CFG-NAVLMT</div><div class="m " style="left:965.0px;top:721px;width:104.600px;overflow:hidden">Limits</div><div class="m " style="left:808.7px;top:749px;">CFG-TPGRP</div><div class="m " style="left:965.0px;top:749px;width:104.600px;overflow:hidden">HW delay</div><div class="m " style="left:808.7px;top:777px;">CFG-SAT</div><div class="m " style="left:965.0px;top:777px;width:104.600px;overflow:hidden">SV attr</div><div style="position:absolute;left:746px;top:801px;width:323px;height:28px;background:#2a80c2"></div><div class="m w" style="left:780.7px;top:805px;">Custom message</div><div class="m " style="left:780.7px;top:834px;">Send file</div><div class="sbt" style="position:absolute;left:1069px;top:177px;width:19.5px;height:690px;border-left:1px solid #c4c7c8"></div><div style="position:absolute;left:1070px;top:177px;width:18.5px;height:19px;background:linear-gradient(90deg,#eef0f0,#fafbfb);border-bottom:1px solid #c9cccd"></div><div style="position:absolute;width:0;height:0;border-left:5px solid transparent;border-right:5px solid transparent;border-bottom:5px solid #4d4d4d;left:1073.7px;top:183.1px"></div><div class="thumb" style="position:absolute;left:1070px;top:196px;width:18.5px;height:113.5px;"></div><div style="position:absolute;left:1070px;top:847.5px;width:18.5px;height:19.5px;background:linear-gradient(90deg,#eef0f0,#fafbfb);border-top:1px solid #c9cccd"></div><div style="position:absolute;width:0;height:0;border-left:5px solid transparent;border-right:5px solid transparent;border-top:5px solid #4d4d4d;left:1073.7px;top:854.5px"></div><div class="sbh" style="position:absolute;left:746px;top:867px;width:342.5px;height:19px;border-top:1px solid #c4c7c8"></div><div style="position:absolute;left:746px;top:868px;width:19px;height:18px;background:linear-gradient(#eef0f0,#fafbfb);border-right:1px solid #c9cccd"></div><div style="position:absolute;width:0;height:0;border-top:5px solid transparent;border-bottom:5px solid transparent;border-right:5px solid #4d4d4d;left:752.3px;top:872px"></div><div class="thumb" style="position:absolute;left:1037.5px;top:868px;width:13px;height:18px;"></div><div style="position:absolute;left:1050.5px;top:868px;width:18.5px;height:18px;background:linear-gradient(#eef0f0,#fafbfb);border-left:1px solid #c9cccd;border-right:1px solid #c9cccd"></div><div style="position:absolute;width:0;height:0;border-top:5px solid transparent;border-bottom:5px solid transparent;border-left:5px solid #4d4d4d;left:1057.5px;top:872px"></div><div style="position:absolute;left:1069.5px;top:868px;width:19px;height:18px;background:#ebeeef"></div><div class="m " style="left:1100.2px;top:176px;">Custom message</div><div class="hl" style="position:absolute;left:1099px;top:207.5px;width:848.5px;height:2px;"></div><div class="m " style="left:1112.5px;top:240px;">Type message:</div><div class="btn" style="position:absolute;left:1693px;top:234.5px;width:59.5px;height:34.5px;"></div><svg style="position:absolute;left:1712px;top:241px" width="22" height="22" viewBox="0 0 22 22"><circle cx="11" cy="11" r="8.300" fill="#dfe2e3" stroke="#3c3c3c" stroke-width="2.300"/><path d="M12.600 4.800L11.400 11.600 6.200 16.400" fill="none" stroke="#2a2a2a" stroke-width="1.500"/><path d="M6 19.400h10" stroke="#555" stroke-width="1.200"/></svg><div style="position:absolute;width:0;height:0;border-left:3px solid transparent;border-right:3px solid transparent;border-top:3px solid #4d4d4d;left:1737.7px;top:249.8px"></div><div class="btn" style="position:absolute;left:1762.5px;top:234.5px;width:41.5px;height:34.5px;"></div><svg style="position:absolute;left:1777px;top:243px" width="16" height="20" viewBox="0 0 16 20"><path d="M1.600 1.600h12.800v4.400h-1.700V4.200H9.700v11h2.200v2.200H4.100v-2.200h2.200v-11H3.300v1.800H1.600z" fill="#24486e"/><path d="M2 2.400h12" stroke="#9ad0f4" stroke-width="1.200"/><path d="M7 4.600v11" stroke="#6fa9d8" stroke-width="1"/></svg><div style="position:absolute;left:1813.5px;top:241.5px;width:18.5px;height:19px;border:1px solid #a6a9aa;background:#f3f5f5;box-shadow:inset 0 1px 1px rgba(0,0,0,.08)"></div><svg style="position:absolute;left:1815px;top:243px" width="16" height="16" viewBox="0 0 16 16"><path d="M3 8.600l3.400 3.800L12.800 2.600" fill="none" stroke="#111" stroke-width="2.300"/></svg><div class="m " style="left:1840.7px;top:239px;">Checksum</div><div class="ta" style="position:absolute;left:1111.5px;top:279px;width:823.5px;height:246.5px;"></div><div class="m " style="left:1121.0px;top:287px;">PQSETCNST,47</div><div class="m " style="left:1112.5px;top:535px;">Message preview:</div><div class="ta" style="position:absolute;left:1111.5px;top:567.5px;width:823.5px;height:247px;"></div><div class="m " style="left:1121.0px;top:576px;">$PQSETCNST,47*66\r\n</div><div class="hl" style="position:absolute;left:1099px;top:836.5px;width:848.5px;height:2px;"></div><div class="btn on" style="position:absolute;left:1099.8px;top:851px;width:41px;height:34.5px;"></div><svg style="position:absolute;left:1109.5px;top:858px" width="24" height="24" viewBox="0 0 24 24"><circle cx="8.600" cy="8.400" r="6.400" fill="#b9bdc0" stroke="#5a5d60" stroke-width="2.200"/><rect x="5.800" y="5.400" width="5" height="4.600" fill="#dfe2e3"/><path d="M13 13l6.600 7" stroke="#44474a" stroke-width="3.600" stroke-linecap="round"/><path d="M17.600 18.200l2 2.200" stroke="#6a6f9a" stroke-width="2.600" stroke-linecap="round"/></svg><div class="btn" style="position:absolute;left:1151.3px;top:851px;width:140.5px;height:36.3px;"></div><div class="m " style="left:1201.3px;top:858px;">Send</div><div class="fld" style="position:absolute;left:1301.6px;top:851px;width:443.5px;height:36.3px;"></div><div class="m " style="left:1308.1px;top:858px;">$PQSETCNST,47*66</div><div class="btn" style="position:absolute;left:1755px;top:851px;width:42px;height:34.5px;"></div><svg style="position:absolute;left:1766px;top:859px" width="21" height="20" viewBox="0 0 21 20"><rect x="1.200" y="1.200" width="18" height="17.600" rx="3" fill="#e9eef2" stroke="#16202a" stroke-width="1.800"/><path d="M14.600 5.600H9.400a3 3 0 0 0-3 3v3a3 3 0 0 0 3 3h5.200" fill="none" stroke="#2a3f5a" stroke-width="2.200"/></svg><div class="btn" style="position:absolute;left:1807px;top:851px;width:140.5px;height:36.3px;"></div><div class="m " style="left:1856.7px;top:858px;">Save</div>
<div style="position:absolute;left:1009px;top:953px;width:693px;height:227px;background:#ebeeef;border-left:1px solid #8b8d8e;border-right:2px solid #7e8081;border-bottom:2px solid #7e8081;box-shadow:0 1px 0 #b7b8b8"></div><div style="position:absolute;left:1010px;top:955px;width:1px;height:223px;background:#f7f9f9"></div><div style="position:absolute;left:1010px;top:918px;width:692px;height:35px;background:linear-gradient(#2d8dd9 0,#2a86cf 46%,#2579bb 54%,#2476b6 100%);border-radius:8px 8px 0 0;border:1px solid #14507f;border-top:1.500px solid #0f3f68;border-bottom:none;"></div><div style="position:absolute;left:1009px;top:952px;width:693px;height:2px;background:linear-gradient(#154c78,#1b5e94)"></div><div class="m w" style="left:1286.9px;top:923px;">CN0 View</div><div class="tbn a" style="left:1610.8px;top:923px"><i style="left:4.500px;top:15px;width:14px;height:3px"></i></div><div class="tbn a" style="left:1639.1px;top:923px"><i style="left:8px;top:8px;width:7px;height:7px"></i><i style="left:10px;top:11px;width:3.5px;height:2.2px;background:#2a7fc4"></i></div><div class="tbn a" style="left:1667.6px;top:923px"><i style="left:8.5px;top:8px;width:7px;height:7.5px;border-radius:1px"></i><i style="left:11.300px;top:8px;width:1.4px;height:1.3px;background:#2a7fc4"></i><i style="left:11.300px;top:14.200px;width:1.4px;height:1.3px;background:#2a7fc4"></i><i style="left:8.5px;top:11.100px;width:1.3px;height:1.4px;background:#2a7fc4"></i><i style="left:14.200px;top:11.100px;width:1.3px;height:1.4px;background:#2a7fc4"></i></div><svg style="position:absolute;left:1018px;top:924px" width="24" height="24" viewBox="0 0 24 24"><rect x="1" y="1" width="22" height="22" rx="2.500" fill="#fff" stroke="#121c2a" stroke-width="1.600"/><rect x="3.600" y="8" width="4" height="12.600" fill="#7cbc3c"/><rect x="8.200" y="9.600" width="4" height="11" fill="#d98a3a"/><rect x="12.800" y="5" width="4" height="15.600" fill="#7cbc3c"/><rect x="17.400" y="12.600" width="3.600" height="8" fill="#c9504a"/><path d="M7.600 8v12.600M12.200 9.600v11M16.800 5v15.600" stroke="#222" stroke-width="1"/></svg><div class="m " style="left:1024.2px;top:962px;">Used/View: 0/0</div><div style="position:absolute;left:1010px;top:953px;width:691px;height:1px;background:#cfe8f6"></div><svg style="position:absolute;left:1390px;top:1070px" width="70" height="110" viewBox="0 0 70 110"><path d="M52.300 8.600L17.500 77.200 12.100 72.700 10.600 101 31.100 81.300 24.800 79.600 52.900 9z" fill="#fb4e50"/></svg>
<div style="position:absolute;left:0px;top:1173px;width:2050px;height:2px;background:linear-gradient(#8b8d8e,#c2c5c6)"></div>
<div style="position:absolute;left:0px;top:1175px;width:2050px;height:43px;background:#ebeeef"></div>
<div style="position:absolute;left:1262px;top:1181px;width:2px;height:27px;background:linear-gradient(90deg,#9da0a1 50%,#fbfcfc 50%)"></div>
<div style="position:absolute;left:1528px;top:1181px;width:2px;height:27px;background:linear-gradient(90deg,#9da0a1 50%,#fbfcfc 50%)"></div>
<div style="position:absolute;left:1691px;top:1181px;width:2px;height:27px;background:linear-gradient(90deg,#9da0a1 50%,#fbfcfc 50%)"></div>
<div style="position:absolute;left:1852px;top:1181px;width:2px;height:27px;background:linear-gradient(90deg,#9da0a1 50%,#fbfcfc 50%)"></div>
<div class="m " style="left:1316.0px;top:1182px;">COM4, 9600, 3050bps</div>
<div class="m " style="left:1564.0px;top:1182px;">No savefile</div>
<div class="m " style="left:1744.7px;top:1182px;">No replay</div>
<div class="m " style="left:1906.3px;top:1182px;">No connection</div>
<div style="position:absolute;left:1712px;top:1188px;width:13px;height:12px;background:#e8483c;border:1px solid #6a1f19"></div>
<svg style="position:absolute;left:1270px;top:1178px" width="40" height="32" viewBox="0 0 40 32"><path d="M6.600 14.400h7M6.600 18.600h7M26 14.400h8M26 18.600h8" stroke="#111" stroke-width="1.600"/><rect x="13.400" y="8" width="13" height="17" rx="4" fill="#3fae62" stroke="#111" stroke-width="1.400"/><rect x="18.400" y="6.600" width="3.100" height="19.600" fill="#111"/></svg><svg style="position:absolute;left:1868px;top:1178px" width="24" height="32" viewBox="0 0 24 32"><g transform="translate(2.4,1) scale(1.05)"><path d="M2.2 10.6V2.4h3.4V.6h7.6v1.8h3.4v8.2" fill="#fff" stroke="#111" stroke-width="1.4"/><path d="M6.6 3.2h5.6l-1.8 2.6v4.6H8.4V5.8z" fill="#111"/><path d="M4.2 5v5M14.6 5v5" stroke="#111" stroke-width="1"/><rect x="0" y="10.6" width="18.8" height="8.2" fill="#16111a"/><rect x="4.8" y="13.8" width="9.2" height="1.9" fill="#d6365f"/><rect x="7" y="18.8" width="4.7" height="8.6" fill="#16111a"/><rect x="2" y="21.1" width="14.8" height="1.3" fill="#16111a"/><rect x="3.6" y="24.6" width="11.6" height="1.3" fill="#16111a"/></g></svg>
</div>
</body>
</html>
